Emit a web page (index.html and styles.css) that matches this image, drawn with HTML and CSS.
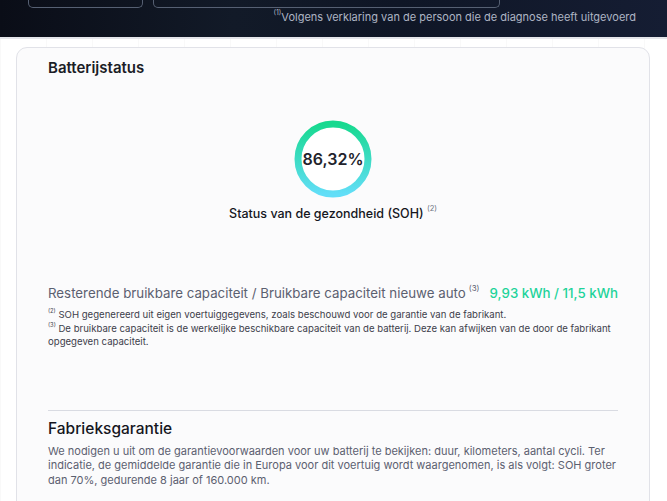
FILE: index.html
```html
<!DOCTYPE html>
<html lang="nl">
<head>
    <meta charset="UTF-8">
    <meta name="viewport" content="width=device-width, initial-scale=1.0">
    <title>Batterijrapport</title>
    <link rel="stylesheet" href="styles.css">
</head>
<body>
    <header id="hero">
        <div id="hero-boxes">
            <div class="hero-box hero-box-small"></div>
            <div class="hero-box hero-box-wide"></div>
        </div>
        <p id="hero-note"><sup>(1)</sup>Volgens verklaring van de persoon die de diagnose heeft uitgevoerd</p>
    </header>

    <main id="page">
        <section class="card">
            <h2 class="card-title">Batterijstatus</h2>

            <div id="soh">
                <div class="gauge">
                    <svg width="78" height="78" viewBox="0 0 78 78">
                        <defs>
                            <linearGradient id="ring-grad" x1="0" y1="0" x2="0" y2="1">
                                <stop offset="0" stop-color="#17d98f"/>
                                <stop offset="1" stop-color="#62def8"/>
                            </linearGradient>
                        </defs>
                        <circle cx="39" cy="39" r="35" fill="#fff" stroke="url(#ring-grad)" stroke-width="7"/>
                    </svg>
                    <span class="gauge-value">86,32%</span>
                </div>
                <div class="soh-label">Status van de gezondheid (SOH) <sup>(2)</sup></div>
            </div>

            <div class="capacity-row">
                <span class="capacity-label">Resterende bruikbare capaciteit / Bruikbare capaciteit nieuwe auto<sup>(3)</sup></span>
                <span class="capacity-value">9,93 kWh / 11,5 kWh</span>
            </div>

            <div class="notes">
                <p><sup>(2)</sup> SOH gegenereerd uit eigen voertuiggegevens, zoals beschouwd voor de garantie van de fabrikant.</p>
                <p><sup>(3)</sup> De bruikbare capaciteit is de werkelijke beschikbare capaciteit van de batterij. Deze kan afwijken van de door de fabrikant opgegeven capaciteit.</p>
            </div>

            <div class="warranty">
                <h3>Fabrieksgarantie</h3>
                <p>We nodigen u uit om de garantievoorwaarden voor uw batterij te bekijken: duur, kilometers, aantal cycli. Ter indicatie, de gemiddelde garantie die in Europa voor dit voertuig wordt waargenomen, is als volgt: SOH groter dan 70%, gedurende 8 jaar of 160.000 km.</p>
            </div>
        </section>
    </main>
</body>
</html>
```

FILE: styles.css
```css
body {
    margin: 0;
    background-color: #ffffff;
    font-family: 'Inter', 'Noto Sans', sans-serif;
    color: #1b1d26;
    overflow: hidden;
}

sup {
    font-size: 0.6em;
    line-height: 1;
    vertical-align: top;
    position: relative;
    top: -0.1em;
}

/* Dark hero band at the top */
#hero {
    height: 37px;
    background: linear-gradient(90deg, #0a0d17 0%, #121a28 35%, #0f1626 60%, #151d33 100%);
    border-bottom: 2px solid #e4e5ea;
    overflow: hidden;
}

/* only the bottom edge of the summary boxes shows */
#hero-boxes {
    display: flex;
    gap: 10px;
    padding-left: 28px;
}

.hero-box {
    height: 7px;
    border: 1px solid #566073;
    border-top: none;
    border-radius: 0 0 5px 5px;
}

.hero-box-small {
    width: 113px;
}

.hero-box-wide {
    width: 345px;
}

#hero-note {
    margin: 2px 31px 0 0;
    text-align: right;
    font-size: 11px;
    color: #aeb5c4;
}

#hero-note sup {
    font-size: 7px;
}

/* Page with faint grid */
#page {
    padding: 8px 17px 0 16px;
    min-height: 470px;
    background-image: linear-gradient(90deg, rgba(0, 0, 0, 0.025) 1px, transparent 1px);
    background-size: 46px 100%;
}

.card {
    background-color: #fbfbfc;
    border: 1px solid #e1e2e8;
    border-radius: 11px;
    padding: 10px 31px 40px 31px;
    min-height: 460px;
}

.card-title {
    margin: 0;
    font-size: 15px;
    font-weight: 600;
    color: #1b1d26;
}

/* State of health gauge */
#soh {
    display: flex;
    flex-direction: column;
    align-items: center;
    margin-top: 43px;
}

.gauge {
    position: relative;
    width: 78px;
    height: 78px;
}

.gauge svg {
    display: block;
}

.gauge-value {
    position: absolute;
    top: 0;
    left: 0;
    width: 100%;
    line-height: 78px;
    text-align: center;
    font-size: 16px;
    font-weight: 600;
    color: #22232b;
}

.soh-label {
    margin-top: 8px;
    font-size: 12.5px;
    font-weight: 500;
    color: #15161d;
}

.soh-label sup {
    font-weight: 400;
    color: #6a6f7d;
}

/* Capacity */
.capacity-row {
    display: flex;
    justify-content: space-between;
    align-items: baseline;
    margin-top: 64px;
}

.capacity-label {
    font-size: 13.3px;
    color: #5b6070;
}

.capacity-label sup {
    margin-left: 3px;
}

.capacity-value {
    font-size: 13.3px;
    font-weight: 500;
    color: #1ed39a;
}

.notes {
    margin-top: 7px;
    font-size: 9.6px;
    line-height: 13.5px;
    color: #3d404b;
}

.notes p {
    margin: 0;
}

.notes sup {
    top: 0;
}

/* Warranty */
.warranty {
    margin-top: 61px;
    border-top: 1px solid #d9dbe2;
    padding-top: 8px;
}

.warranty h3 {
    margin: 0;
    font-size: 15.5px;
    font-weight: 500;
    color: #15161d;
}

.warranty p {
    margin: 6px 0 0 0;
    font-size: 11px;
    line-height: 14.5px;
    color: #5b6070;
}
```
